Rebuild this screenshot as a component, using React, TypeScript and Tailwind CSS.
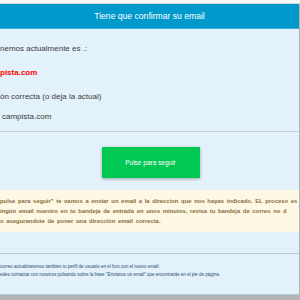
export default function App() {
  return (
    <div className="h-[300px] w-[300px] overflow-hidden bg-[#b4b4b4] font-['Liberation_Sans',Arial,sans-serif]">
      <div className="h-[3px] bg-[#f6f9f6]" />
      <div className="h-px bg-[#d3ddd3]" />
      <div className="flex h-[291px] w-[299px] flex-col border-b border-[#a9cfd9] bg-[#e3f1fb]">
        {/* Header */}
        <div className="flex h-[25px] shrink-0 items-center justify-center border-b border-[#40b1dc] bg-[#0099cc] text-[8.6px] text-white">
          Tiene que confirmar su email
        </div>

        {/* Current email */}
        <div className="flex flex-col whitespace-nowrap pt-[10px] text-[8px] text-[#3b3b3b]">
          <div className="flex h-[20px] items-center">nemos actualmente es .:</div>
          <div className="mt-[4px] flex h-[20px] items-center font-bold text-[#ff0000]">pista.com</div>
          <div className="mt-[4px] flex h-[20px] items-center">ón correcta (o deja la actual)</div>
          <div className="flex h-[20px] items-center pl-[2px]">campista.com</div>
        </div>
        <div className="mt-[4px] h-px bg-[#c9d3dc]" />

        {/* Button */}
        <div className="mt-[15px] flex justify-center">
          <button className="ml-[2px] flex h-[31px] w-[98px] items-center justify-center bg-[#00c853] text-[6.5px] text-white shadow-[0_1px_3px_rgba(0,0,0,0.3)]">
            Pulse para seguir
          </button>
        </div>

        {/* Warning */}
        <div className="mt-[12px] flex h-[42px] flex-col justify-center overflow-hidden whitespace-nowrap bg-[#fcf8e3] text-[5.9px] font-bold leading-[10px] text-[#8a6d3b] [word-spacing:1px]">
          <div>pulse para seguir" te vamos a enviar un email a la direccion que nos hayas indicado. EL proceso es</div>
          <div>ingún email nuestro en tu bandeja de entrada en unos minutos, revisa tu bandeja de correo no d</div>
          <div>o asegurandote de poner una dirección email correcta.</div>
        </div>

        <div className="mt-[21px] h-px bg-[#b9c8d4]" />

        {/* Footer notes */}
        <div className="mt-[9px] flex flex-col whitespace-nowrap text-[4.5px] leading-[7.5px] text-[#1f4e70]">
          <div>correo actualizaremos tambien tu perfil de usuario en el foro con el nuevo email.</div>
          <div>edes contactar con nosotros pulsando sobre la frase "Envianos un email" que encontrarás en el pie de página.</div>
        </div>
      </div>
    </div>
  );
}
